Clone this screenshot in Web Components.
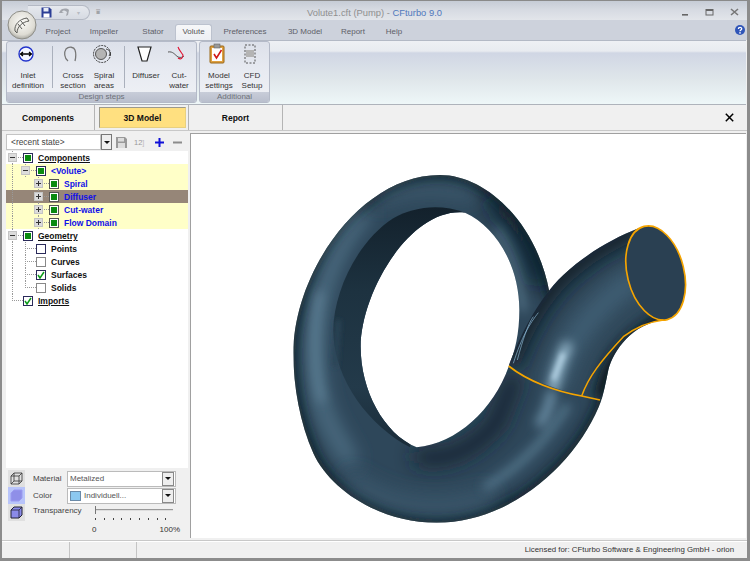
<!DOCTYPE html>
<html>
<head>
<meta charset="utf-8">
<title>CFturbo</title>
<style>
  html, body { margin: 0; padding: 0; background: #8c8c8c; }
  body { width: 750px; height: 561px; overflow: hidden; font: 8px "Liberation Sans", Arial, sans-serif; }
</style>
</head>
<body>
<cf-window>
  <cf-titlebar></cf-titlebar>
  <cf-tabs>
    <cf-tab w="46">Project</cf-tab>
    <cf-tab w="46">Impeller</cf-tab>
    <cf-tab w="48" pad="4">Stator</cf-tab>
    <cf-tab w="37" active>Volute</cf-tab>
    <cf-tab w="66">Preferences</cf-tab>
    <cf-tab w="54">3D Model</cf-tab>
    <cf-tab w="42">Report</cf-tab>
    <cf-tab w="40">Help</cf-tab>
  </cf-tabs>
  <cf-ribbon>
    <cf-group label="Design steps" w="191">
      <cf-rbtn w="44" icon="inlet">Inlet<br>definition</cf-rbtn>
      <cf-sep m="2"></cf-sep>
      <cf-rbtn w="36" icon="cross">Cross<br>section</cf-rbtn>
      <cf-rbtn w="26" icon="spiral">Spiral<br>areas</cf-rbtn>
      <cf-sep m="7"></cf-sep>
      <cf-rbtn w="38" icon="diffuser">Diffuser</cf-rbtn>
      <cf-rbtn w="28" icon="cut">Cut-<br>water</cf-rbtn>
    </cf-group>
    <cf-group label="Additional" w="71">
      <cf-rbtn w="40" icon="model">Model<br>settings</cf-rbtn>
      <cf-rbtn w="26" icon="cfd">CFD<br>Setup</cf-rbtn>
    </cf-group>
  </cf-ribbon>
  <cf-viewtabs></cf-viewtabs>
  <cf-main>
    <cf-side slot="side">
      <cf-statebar></cf-statebar>
      <cf-tree>
        <cf-node guides="" exp="minus" box="on" top>Components</cf-node>
        <cf-node guides="l" exp="minus" box="on" kind="blue" bg="y">&lt;Volute&gt;</cf-node>
        <cf-node guides="l_" exp="plus" box="on2" kind="blue" bg="y">Spiral</cf-node>
        <cf-node guides="l_" exp="plus" box="on2" kind="blue" bg="b">Diffuser</cf-node>
        <cf-node guides="l_" exp="plus" box="on2" kind="blue" bg="y">Cut-water</cf-node>
        <cf-node guides="l_" exp="plus" box="on2" kind="blue" bg="y">Flow Domain</cf-node>
        <cf-node guides="" exp="minus" box="on" top>Geometry</cf-node>
        <cf-node guides="l" exp="line" box="off">Points</cf-node>
        <cf-node guides="l" exp="line" box="off2">Curves</cf-node>
        <cf-node guides="l" exp="line" box="chk">Surfaces</cf-node>
        <cf-node guides="l" exp="end" box="off2">Solids</cf-node>
        <cf-node guides="" exp="end" box="chk" top>Imports</cf-node>
      </cf-tree>
      <cf-look></cf-look>
    </cf-side>
    <cf-volute slot="view"></cf-volute>
  </cf-main>
  <cf-status>Licensed for: CFturbo Software &amp; Engineering GmbH - orion</cf-status>
</cf-window>

<script>
const define = (name, html) => {
  customElements.define(name, class extends HTMLElement {
    constructor () {
      super()
      this.attachShadow({ mode: 'open' }).innerHTML = typeof html === 'function' ? html(this) : html
    }
  })
}

define('cf-window', `
  <style>
    :host { display: block; width: 750px; height: 561px; box-sizing: border-box; background: #f0f0f0;
      border-top: 1px solid #8a8a8a; border-left: 2px solid #8c8c8c; border-right: 3px solid #8c8c8c; border-bottom: 3px solid #8c8c8c; color: #222; }
    .col { display: flex; flex-direction: column; height: 100%; }
  </style>
  <div class="col"><slot></slot></div>
`)

define('cf-titlebar', `
  <style>
    :host { display: flex; height: 19px; box-sizing: border-box; padding-top: 3px; align-items: center; position: relative;
      background: linear-gradient(#c6ccd6, #d6dae2 45%, #e2e5ea); }
    .logo { position: absolute; left: 5px; top: 9px; width: 30px; height: 30px; z-index: 3; }
    .qa { margin-left: 26px; width: 62px; height: 15px; display: flex; align-items: center; gap: 7px; padding-left: 13px; box-sizing: border-box;
      background: linear-gradient(#e6e9ee, #d6dae2); border: 1px solid #b4b9c4; border-left: 0; border-radius: 0 9px 9px 0; }
    .drop { margin-left: 6px; color: #777; font-size: 7px; }
    .title { position: absolute; left: 305px; width: 140px; top: 6px; font-size: 9.400px; color: #8f8f8f; white-space: nowrap; }
    .title b { font-weight: normal; color: #4f78bd; }
    .wc { margin-left: auto; display: flex; gap: 16px; padding-right: 8px; align-items: center; }
  </style>
  <svg class="logo" viewBox="0 0 30 30">
    <defs><radialGradient id="g" cx=".5" cy=".4" r=".6"><stop offset="0" stop-color="#fbfbf8"/><stop offset=".75" stop-color="#dedcd4"/><stop offset="1" stop-color="#a9a8a2"/></radialGradient></defs>
    <circle cx="15" cy="15" r="14" fill="url(#g)" stroke="#8e8e88"/>
    <path d="M8 21C7 15 12 9 20 8M10 23C10 17 15 12 22 11M8 21L10 23M20 8L22 11M11 14L15 19M14 11L18 16" fill="none" stroke="#5c5c58" stroke-width="1"/>
  </svg>
  <div class="qa">
    <svg width="11" height="11" viewBox="0 0 11 11"><path d="M.5.5h8l2 2v8H.5z" fill="#2c3e96"/><rect x="2.5" y="1" width="5" height="3.5" fill="#e8ecf6"/><rect x="2.5" y="6.5" width="6" height="4" fill="#fff"/></svg>
    <svg width="11" height="10" viewBox="0 0 11 10"><path d="M1 4C3 1 8 1 10 3L9 8 7 9 8 5C6 3 4 3 3 5L5 6H0z" fill="#a3a6ad"/></svg>
    <span style="color:#b7bac2;font-size:6px">▾</span>
  </div>
  <span class="drop">⩸</span>
  <div class="title">Volute1.cft (Pump) - <b>CFturbo 9.0</b></div>
  <div class="wc">
    <svg width="8" height="8" viewBox="0 0 8 8"><rect x="1" y="6" width="6" height="1.6" fill="#666"/></svg>
    <svg width="9" height="8" viewBox="0 0 9 8"><rect x="1" y="1.5" width="7" height="5.5" fill="none" stroke="#666"/><rect x="1" y="1" width="7" height="2" fill="#666"/></svg>
    <svg width="9" height="8" viewBox="0 0 9 8"><path d="M1 1l7 6M8 1L1 7" stroke="#777" stroke-width="1.6"/></svg>
  </div>
`)

define('cf-tabs', `
  <style>
    :host { display: flex; height: 20px; box-sizing: border-box; padding-left: 33px; align-items: flex-end; background: #cdd2dc; }
    svg { margin-left: auto; margin-right: 2px; align-self: center; }
  </style>
  <slot></slot>
  <svg width="10" height="10" viewBox="0 0 10 10" style="margin-right:2px"><circle cx="5" cy="5" r="5" fill="#2f55b8"/><path d="M3.4 3.9C3.4 2 6.7 2 6.7 3.8 6.7 5 5 4.9 5 6.2" fill="none" stroke="#fff" stroke-width="1.3"/><circle cx="5" cy="7.9" r=".8" fill="#fff"/></svg>
`)

define('cf-tab', el => `
  <style>
    :host { display: block; flex: none; box-sizing: content-box; }
    div { height: 16px; line-height: 15px; text-align: center; color: #5d6068; box-sizing: border-box; }
    :host([active]) div { background: linear-gradient(#f6f7f9, #eef0f4); border: 1px solid #bcc2ce; border-bottom: 0; border-radius: 3px 3px 0 0; line-height: 14px; color: #555; }
  </style>
  <div style="width:${(el.getAttribute('w') - (el.getAttribute('pad') || 0))}px;margin-left:${el.getAttribute('pad') || 0}px"><slot></slot></div>
`)

define('cf-ribbon', `
  <style>
    :host { display: flex; height: 65px; box-sizing: border-box; gap: 2px; padding: 0 2px 1px 4px; margin-right: 1px; border-top: 1px solid #b3b9c5; border-bottom: 1px solid #aeb3bb;
      background: linear-gradient(#eef0f4 0, #e8ebf0 16%, #d0d6e4 19%, #dfe6ea 60%, #eef7f8 100%); }
  </style>
  <slot></slot>
`)

define('cf-group', el => `
  <style>
    :host { display: flex; flex-direction: column; flex: none; width: ${el.getAttribute('w')}px; border-radius: 3px; border: 1px solid #b4bac8; box-sizing: border-box;
      background: linear-gradient(#dde1ea, #e8ebf2 50%, #eff1f5); overflow: hidden; }
    .body { flex: 1; display: flex; margin-left: -1px; }
    .label { height: 10px; line-height: 10px; text-align: center; color: #6c7078; background: linear-gradient(#c8cdd9, #b9bfcd); }
  </style>
  <div class="body"><slot></slot></div>
  <div class="label">${el.getAttribute('label')}</div>
`)

const RIBBON_ICONS = {
  inlet: `<circle cx="12" cy="11" r="7" fill="#f4f6ff" stroke="#2233cc" stroke-width="1.4"/><path d="M7 11h10M9 9l-2.500 2 2.500 2M15 9l2.500 2-2.500 2" fill="none" stroke="#000" stroke-width="1.300"/>`,
  cross: `<path d="M9 18C5 15 5 9 7 6c3-3 8-2 9 1 1 3 1 7 0 11" fill="none" stroke="#777" stroke-width="1.300"/>`,
  spiral: `<circle cx="12" cy="11" r="8.500" fill="none" stroke="#333" stroke-dasharray="2 1"/><circle cx="11" cy="11" r="5.500" fill="#b4b4b4" stroke="#555"/><path d="M16 6c4 1 5 4 3 7" fill="none" stroke="#444"/>`,
  diffuser: `<path d="M6 4h13l-4 14h-5z" fill="#fff" stroke="#222" stroke-width="1.200"/>`,
  cut: `<path d="M3 9c5-1 7 3 10 5 3 1 5 0 6-1" fill="none" stroke="#555"/><path d="M13 4c1 3 3 5 5 8 0 3-2 5-5 3" fill="none" stroke="#e01030" stroke-width="1.100"/>`,
  model: `<rect x="5" y="3" width="14" height="17" rx="1" fill="#e0a040" stroke="#9a6818"/><rect x="7" y="5" width="10" height="13" fill="#fff"/><rect x="9" y="1" width="6" height="4" fill="#999" stroke="#666" stroke-width=".6"/><path d="M9 11l2.500 4 5-8" fill="none" stroke="#d01818" stroke-width="1.600"/>`,
  cfd: `<rect x="7" y="2" width="10" height="18" fill="none" stroke="#555" stroke-dasharray="2 1.500"/><rect x="8" y="7" width="8" height="7" fill="#b4b4b4"/>`,
}

define('cf-rbtn', el => `
  <style>
    :host { display: flex; flex-direction: column; align-items: center; flex: none; width: ${el.getAttribute('w')}px; }
    svg { margin-top: 1px; height: 22px; width: 24px; flex: none; }
    div { margin-top: 6px; line-height: 9.500px; text-align: center; color: #333; white-space: nowrap; }
  </style>
  <svg viewBox="2 0 24 22">${RIBBON_ICONS[el.getAttribute('icon')]}</svg>
  <div><slot></slot></div>
`)

define('cf-sep', el => `
  <style>:host { display: block; flex: none; width: 1px; height: 42px; margin: 4px 2px 0 ${el.getAttribute('m')}px; background: #aab0bc; }</style>
`)

define('cf-viewtabs', `
  <style>
    :host { display: flex; height: 26px; box-sizing: border-box; background: #f0f0f0; font: bold 8.500px "Liberation Sans", Arial, sans-serif; color: #111; border-bottom: 1px solid #c8c8c8; }
    .t { display: flex; align-items: center; justify-content: center; flex: none; border-right: 1px solid #b4b4b4; }
    .on { background: #ffe080; margin: 2px 0 2px 4px; border: 1px solid #9c9a8c; border-bottom-color: #e8d080; border-right-color: #e8d080; }
    .wrap { display: flex; }
    .x { margin-left: auto; margin-right: 13px; align-self: center; }
  </style>
  <div class="t" style="width:92px">Components</div>
  <div class="wrap" style="width:93px;border-right:1px solid #b4b4b4"><div class="t on" style="width:85px">3D Model</div></div>
  <div class="t" style="width:93px">Report</div>
  <svg class="x" width="9" height="9" viewBox="0 0 9 9"><path d="M.8.8l7.400 7.400M8.200.8L.8 8.200" stroke="#000" stroke-width="1.500"/></svg>
`)

define('cf-main', `
  <style>
    :host { display: flex; flex: 1; min-height: 0; gap: 2px; padding: 2px 0 0 4px; box-sizing: border-box; background: #f0f0f0; }
    .s { width: 182px; flex: none; display: flex; }
    .v { flex: 1; display: flex; }
  </style>
  <div class="s"><slot name="side"></slot></div>
  <div class="v"><slot name="view"></slot></div>
`)

define('cf-side', `
  <style>:host { display: flex; flex-direction: column; width: 100%; height: 100%; background: #fff; }</style>
  <slot></slot>
`)

define('cf-statebar', `
  <style>
    :host { display: flex; height: 18px; flex: none; align-items: center; background: #f0f0f0; box-sizing: border-box; }
    .combo { width: 95px; height: 16px; box-sizing: border-box; background: #fff; border: 1px solid #c4c4c4; padding-left: 4px; line-height: 14px; color: #444; white-space: nowrap; font-size: 8.400px; }
    .arrow { width: 11px; height: 16px; box-sizing: border-box; border: 1px solid #777; background: #eee; display: flex; align-items: center; justify-content: center; }
    .arrow i { display: block; border: 3px solid transparent; border-top: 3px solid #111; border-bottom: 0; }
    .tools { display: flex; flex: 1; align-items: center; padding-left: 4px; color: #999; font-size: 7.500px; }
  </style>
  <div class="combo">&lt;recent state&gt;</div>
  <div class="arrow"><i></i></div>
  <div class="tools">
    <svg width="11" height="11" viewBox="0 0 11 11"><path d="M0 0h9l2 2v9H0z" fill="#9a9a9a"/><rect x="2" y="1" width="6" height="3.500" fill="#ddd"/><rect x="2" y="6" width="7" height="5" fill="#ddd"/></svg>
    <span style="width:11px;margin:0 10px 0 7px">12<span style="color:#bbb">]</span></span>
    <svg width="9" height="9" viewBox="0 0 9 9"><path d="M4.500 0v9M0 4.500h9" stroke="#1010d8" stroke-width="2"/></svg>
    <svg width="9" height="9" viewBox="0 0 9 9" style="margin-left:9px"><path d="M0 4.500h9" stroke="#8c8c8c" stroke-width="2"/></svg>
  </div>
`)

define('cf-tree', `
  <style>:host { display: block; flex: 1; background: #fff; min-height: 0; font: bold 8.500px "Liberation Sans", Arial, sans-serif; }</style>
  <slot></slot>
`)

const CHECK = '<svg width="8" height="8" viewBox="0 0 8 8"><path d="M1 4l2 3 4-6" fill="none" stroke="#0a9a18" stroke-width="1.500"/></svg>'

define('cf-node', el => {
  const guides = (el.getAttribute('guides') || '').split('')
  const exp = el.getAttribute('exp')
  const box = el.getAttribute('box')
  const cells = guides.map(g => `<span class="cell ${g === 'l' ? 'v' : ''}"></span>`).join('')
  const glyph = (exp === 'plus' || exp === 'minus')
    ? `<span class="pm">${exp === 'plus' ? '<i class="h"></i><i class="w"></i>' : '<i class="h"></i>'}</span>`
    : ''
  return `
  <style>
    :host { display: flex; height: 13px; align-items: center; color: #111; white-space: nowrap; }
    :host([bg="y"]) { background: #ffffc8; }
    :host([bg="b"]) { background: #968678; }
    :host([kind="blue"]) { color: #1010e8; }
    :host([top]) .txt { text-decoration: underline; }
    .cell { width: 13px; height: 13px; flex: none; box-sizing: border-box; position: relative; }
    .v::before, .exp::before { content: ""; position: absolute; left: 6px; top: 0; bottom: 0; border-left: 1px dotted #999; }
    .exp.end::before { bottom: 6px; }
    .exp::after { content: ""; position: absolute; left: 6px; right: -4px; top: 6px; border-top: 1px dotted #999; }
    .pm { position: absolute; left: 2px; top: 2px; width: 9px; height: 9px; box-sizing: border-box; border: 1px solid #c4c4c4; background: #dcdcdc; z-index: 1; }
    .pm i { position: absolute; background: #333; }
    .pm .h { left: 1px; right: 1px; top: 3px; height: 1px; }
    .pm .w { top: 1px; bottom: 1px; left: 3px; width: 1px; }
    .box { width: 10px; height: 10px; flex: none; box-sizing: border-box; margin: 0 5px 0 4px; background: #fff; display: flex; align-items: center; justify-content: center; position: relative; z-index: 1; border: 1px solid #2a2a5a; }
    .off2 { border-color: #888; }
    .on2 { border-color: #555; }
    .box b { display: block; width: 6px; height: 6px; background: #0a8a10; }
  </style>
  ${cells}<span class="cell exp ${exp === 'end' ? 'end' : ''}">${glyph}</span>
  <span class="box ${box}">${box.startsWith('on') ? '<b></b>' : box === 'chk' ? CHECK : ''}</span>
  <span class="txt"><slot></slot></span>`
})

define('cf-look', `
  <style>
    :host { display: grid; flex: none; height: 73px; box-sizing: border-box; padding-top: 2px; background: #f0f0f0; grid-template-columns: 27px 34px 109px; grid-template-rows: 17px 17px 17px; color: #444; align-items: center; }
    .ic { grid-row: 1 / span 3; display: flex; flex-direction: column; align-self: start; margin-left: 2px; width: 17px; }
    .ic span { display: flex; align-items: center; justify-content: center; height: 17px; background: #e0e0e0; }
    .ic .sel { background: #b8c4fa; }
    .dd { height: 16px; display: flex; box-sizing: border-box; border: 1px solid #bbb; background: #fff; align-items: center; padding-left: 2px; gap: 3px; color: #555; }
    .dd u { text-decoration: none; flex: 1; }
    .dd s { text-decoration: none; width: 10px; height: 12px; border: 1px solid #888; background: #eee; display: flex; align-items: center; justify-content: center; margin-right: 1px; }
    .dd i { display: block; border: 3px solid transparent; border-top: 3px solid #111; border-bottom: 0; }
    .sw { width: 11px; height: 10px; background: #8cc8f0; border: 1px solid #6a8aa8; box-sizing: border-box; }
    .tr { grid-column: 2 / span 2; grid-row: 3; align-self: start; margin-top: 2px; }
    .sl { grid-column: 3; grid-row: 3; align-self: start; margin-top: 2px; }
    .track { height: 1px; background: #999; margin: 3px 3px 0 28px; position: relative; box-shadow: 0 1px 0 #ddd; }
    .track::before { content: ""; position: absolute; left: 0; top: -3px; width: 1px; height: 8px; background: #777; }
    .ticks { height: 2px; margin: 8px 3px 0 28px; background: repeating-linear-gradient(90deg, #444 0 1px, transparent 1px 8.800px); }
    .nums { display: flex; justify-content: space-between; margin: 5px -4px 0 25px; color: #333; }
  </style>
  <div class="ic">
    <span><svg width="13" height="13" viewBox="0 0 13 13"><path d="M1 4h8v8H1zM1 4l3-3h8v8l-3 3M9 4l3-3M4 1v8h8M4 9l-3 3" fill="none" stroke="#333" stroke-width=".8"/></svg></span>
    <span class="sel"><svg width="13" height="13" viewBox="0 0 13 13"><path d="M1 4l3-3h8v8l-3 3H1z" fill="#8f8fe8" stroke="#9a9af0"/></svg></span>
    <span><svg width="13" height="13" viewBox="0 0 13 13"><path d="M1 4l3-3h8v8l-3 3H1z" fill="#8a8ae8" stroke="#223"/><path d="M1 4h8v8M9 4l3-3" fill="none" stroke="#223" stroke-width=".8"/></svg></span>
  </div>
  <div>Material</div>
  <div class="dd"><u>Metalized</u><s><i></i></s></div>
  <div>Color</div>
  <div class="dd"><span class="sw"></span><u>Individuell...</u><s><i></i></s></div>
  <div class="tr">Transparency</div>
  <div class="sl">
    <div class="track"></div>
    <div class="ticks"></div>
    <div class="nums"><span>0</span><span>100%</span></div>
  </div>
`)

// outlines traced from the reference at 3x, hence the viewBox below
const OUTER = 'M480 45C620 45 770 190 808 395C850 500 930 620 965 718C900 900 700 1088 470 1088C300 1088 150 990 100 880C60 790 40 680 40 580C40 340 240 45 480 45Z'
const HOLE = 'M555 158C650 200 718 320 718 450C718 520 705 575 686 620C640 750 530 850 410 862C310 820 242 690 242 560C242 400 390 140 555 158Z'
const TUBE = 'M686 618C715 540 770 420 850 345C920 280 1000 235 1075 205L1150 480C1060 490 1000 570 985 630C975 680 970 700 965 718C900 708 780 680 686 618Z'
const WALL = 'M555 158C480 130 400 140 340 175C230 245 160 400 160 510C160 660 270 800 390 862Z'

define('cf-volute', `
  <style>
    :host { display: block; width: 556px; height: 405px; background: #fff; flex: none; box-shadow: inset 1px 1px 0 #a0a0a0; }
    svg { display: block; }
  </style>
  <svg width="556" height="405" viewBox="-270 -81 1668 1215">
    <defs>
      <clipPath id="ring"><path clip-rule="evenodd" d="${OUTER}${HOLE}"/></clipPath>
      <clipPath id="tube"><path d="${TUBE}"/></clipPath>
      <filter id="b8" filterUnits="userSpaceOnUse" x="-270" y="-81" width="1668" height="1215"><feGaussianBlur stdDeviation="8"/></filter>
      <filter id="b16" filterUnits="userSpaceOnUse" x="-270" y="-81" width="1668" height="1215"><feGaussianBlur stdDeviation="16"/></filter>
      <filter id="b28" filterUnits="userSpaceOnUse" x="-270" y="-81" width="1668" height="1215"><feGaussianBlur stdDeviation="28"/></filter>
      <linearGradient id="wall" x1="0" y1="0" x2="0" y2="1">
        <stop offset="0" stop-color="#13212c"/><stop offset=".35" stop-color="#1d3240"/><stop offset=".75" stop-color="#233a4a"/><stop offset="1" stop-color="#1a2c39"/>
      </linearGradient>
    </defs>
    <g clip-path="url(#ring)">
      <rect x="0" y="0" width="1000" height="1100" fill="#2e475a"/>
      <path d="${OUTER}" fill="none" stroke="#0e1a23" stroke-width="24" filter="url(#b16)"/>
      <path d="M250 160C150 280 105 420 105 580S150 800 210 900" fill="none" stroke="#5d8198" stroke-width="34" stroke-linecap="round" filter="url(#b28)"/>
      <path d="M120 400C100 500 100 620 125 720" fill="none" stroke="#6d92a8" stroke-width="14" stroke-linecap="round" filter="url(#b16)"/>
      <path d="M290 120C380 80 480 80 570 105" fill="none" stroke="#466578" stroke-width="26" stroke-linecap="round" filter="url(#b28)"/>
      <path d="M640 130C700 180 750 260 775 360" fill="none" stroke="#101c25" stroke-width="36" stroke-linecap="round" filter="url(#b28)"/>
      <path d="M650 210C690 270 715 350 730 450" fill="none" stroke="#6f94a8" stroke-width="12" stroke-linecap="round" filter="url(#b16)"/>
      <path d="M220 960C330 1040 480 1060 620 1010" fill="none" stroke="#3c5a6e" stroke-width="44" stroke-linecap="round" filter="url(#b28)"/>
      <path d="M420 890C490 905 570 880 650 790L700 660" fill="none" stroke="#15242f" stroke-width="46" stroke-linecap="round" filter="url(#b28)"/>
      <path d="M620 980C720 920 800 840 860 740" fill="none" stroke="#587b92" stroke-width="22" stroke-linecap="round" filter="url(#b16)"/>
      <path d="M780 790C800 760 810 730 815 700" fill="none" stroke="#7ba2ba" stroke-width="22" stroke-linecap="round" filter="url(#b16)"/>
      <path d="${WALL}" fill="url(#wall)"/>
      <path d="M175 480L165 620" stroke="#2c4556" stroke-width="16" filter="url(#b8)"/>
    </g>
    <g clip-path="url(#tube)">
      <rect x="600" y="150" width="700" height="650" fill="#2f4759"/>
      <path d="M686 618C715 540 770 420 850 345C920 280 1000 235 1075 205" fill="none" stroke="#101d27" stroke-width="60" filter="url(#b28)"/>
      <path d="M965 718C985 630 1000 570 1150 480" fill="none" stroke="#0e1a23" stroke-width="50" filter="url(#b16)"/>
      <path d="M820 690C850 560 940 430 1080 350" fill="none" stroke="#3f5f75" stroke-width="70" filter="url(#b28)"/>
      <path d="M815 700C830 640 845 590 865 550" fill="none" stroke="#a8cce0" stroke-width="26" filter="url(#b16)"/>
      <path d="M820 660L850 580" fill="none" stroke="#b8d6e8" stroke-width="14" filter="url(#b8)"/>
      <path d="M700 610C725 530 750 490 775 458M712 600C728 540 745 490 760 470" fill="none" stroke="#8fbcd8" stroke-width="2"/>
    </g>
    <ellipse cx="1127" cy="339" rx="85" ry="144" transform="rotate(-14 1127 339)" fill="#2a4052" stroke="#f5a400" stroke-width="5"/>
    <path d="M686 618C745 665 830 695 905 708L960 720" fill="none" stroke="#f5a400" stroke-width="5"/>
    <path d="M905 708C925 650 965 600 1030 530C1070 500 1110 485 1150 480" fill="none" stroke="#f5a400" stroke-width="4.500"/>
  </svg>
`)

define('cf-status', `
  <style>
    :host { display: flex; height: 17px; flex: none; background: #f0f0f0; border-top: 1px solid #fff; box-sizing: border-box; color: #333; box-shadow: 0 -1px 0 #c8c8c8; }
    .c { width: 66px; border-right: 1px solid #c4c4c4; flex: none; }
    .r { flex: 1; text-align: right; padding-right: 13px; line-height: 15px; white-space: nowrap; font-size: 7.850px; }
  </style>
  <div class="c" style="width:67px"></div><div class="c"></div>
  <div class="r"><slot></slot></div>
`)
</script>
</body>
</html>
